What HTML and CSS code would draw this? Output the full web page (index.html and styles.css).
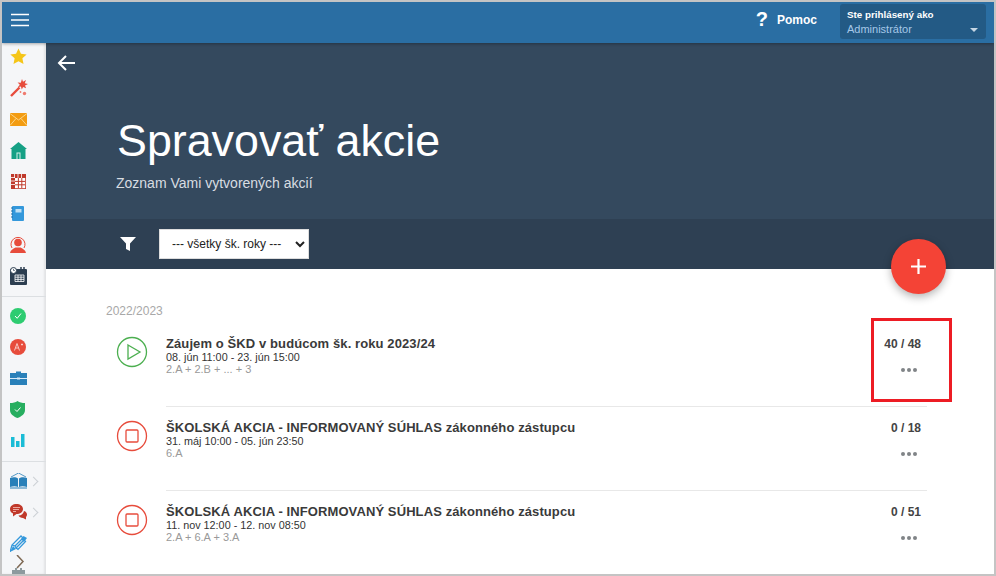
FILE: index.html
```html
<!DOCTYPE HTML>
<html>
    <head>
        <title>Spravovať akcie</title>
        <meta charset="utf-8" />
        <link rel="stylesheet" href="styles.css">
    </head>
    <body>
        <div id="app">
            <header class="topbar">
                <svg class="burger" width="20" height="14" viewBox="0 0 20 14"><path d="M1 1.5h18M1 7h18M1 12.500h18" stroke="#fff" stroke-width="1.600"/></svg>
                <a class="help"><span class="help-mark">?</span><span class="help-text">Pomoc</span></a>
                <div class="user-box">
                    <div class="user-label">Ste prihlásený ako</div>
                    <div class="user-role">Administrátor</div>
                    <span class="user-caret"></span>
                </div>
            </header>
            <div class="body-row">
                <nav class="sidebar">
                    <div class="nav-group">
                        <div class="nav-item"><svg width="17" height="17" viewBox="0 0 18 18"><path d="M9 .5l2.600 5.600 6 .7-4.500 4.100 1.200 6L9 14l-5.300 2.900 1.200-6L.4 6.800l6-.7z" fill="#f5c518"/></svg></div>
                        <div class="nav-item"><svg width="18" height="18" viewBox="0 0 18 18"><path d="M1 17L9.500 8.500" stroke="#e74c3c" stroke-width="2.400"/><path d="M12 0l1 2.800 3-1.700-1.200 3.100 3.200.8-3 1.400 1.100 2.900-3-1.400-1.300 2.600-.9-3-3.100.7 2-2.500-2.200-2.200 3.200.2z" fill="#e74c3c"/><circle cx="14.500" cy="14.500" r="1.700" fill="#ef7a6e"/><circle cx="10.500" cy="13" r=".9" fill="#ef7a6e"/></svg></div>
                        <div class="nav-item"><svg width="17" height="13" viewBox="0 0 17 13"><rect width="17" height="13" fill="#f39c12"/><path d="M0 .5l8.500 6.500L17 .5M0 12.500l6-7M17 12.500l-6-7" fill="none" stroke="#fde3a7" stroke-width=".8"/></svg></div>
                        <div class="nav-item"><svg width="17" height="17" viewBox="0 0 17 17"><path d="M8.500 0l8.500 7h-1.500v10h-14V7H0z" fill="#16a085"/><path d="M6.500 17v-6.500h4V17h-1v-5.500h-2V17z" fill="#d5f0ea"/></svg></div>
                        <div class="nav-item"><svg class="nudge" width="15" height="15" viewBox="0 0 15 15"><rect width="15" height="15" fill="#c0392b"/><path d="M3.500 0v4M7 0v4M10.500 0v4M0 3.500h4M0 7h4M0 10.500h4" stroke="#fff" stroke-width=".8"/><rect x="4" y="4" width="10.200" height="10.200" fill="#fff"/><path d="M7.400 4v10M10.800 4v10M4 7.400h10M4 10.800h10" stroke="#c0392b"/></svg></div>
                        <div class="nav-item"><svg class="nudge" width="13" height="15" viewBox="0 0 13 15"><rect x="1" width="12" height="15" rx="1" fill="#3498db"/><rect x="4.500" y="3" width="6" height="3.500" fill="#bfe0f5"/><path d="M0 2h2M0 5h2M0 8h2M0 11h2" stroke="#1f6fa8"/></svg></div>
                        <div class="nav-item"><svg width="16" height="17" viewBox="0 0 16 17"><path d="M2 12A7 7 0 1 1 14 12" fill="none" stroke="#e74c3c" stroke-width="1"/><circle cx="8" cy="6.500" r="3.800" fill="#e74c3c"/><path d="M0 17c.5-3 3-4 5.500-5.500h5C13 13 15.500 14 16 17z" fill="#e74c3c"/></svg></div>
                        <div class="nav-item"><svg width="17" height="18" viewBox="0 0 17 18"><rect y="2" width="17" height="16" rx="1" fill="#2c3e50"/><path d="M11 0v3M14 0v3" stroke="#2c3e50" stroke-width="1.500"/><path d="M5 8h9v6.500H5zM5 10.200h9M5 12.400h9M8 8v6.500M11 8v6.500" fill="none" stroke="#fff" stroke-width=".8"/><circle cx="3.500" cy="3.500" r="3" fill="#fff" stroke="#2c3e50"/><path d="M3.500 1.800v1.700h1.300" fill="none" stroke="#2c3e50" stroke-width=".7"/></svg></div>
                    </div>
                    <div class="nav-group">
                        <div class="nav-item"><svg width="16" height="16" viewBox="0 0 16 16"><circle cx="8" cy="8" r="8" fill="#2ecc71"/><path d="M5 8l2.200 2.300L11 5.500" fill="none" stroke="#fff"/></svg></div>
                        <div class="nav-item"><svg width="16" height="16" viewBox="0 0 16 16"><circle cx="8" cy="8" r="8" fill="#e74c3c"/><path d="M4.500 11.500L7 4.500l2.500 7M5.500 9h3M11 5.500h2M12 4.500v2" fill="none" stroke="#fbd5d0" stroke-width=".9"/></svg></div>
                        <div class="nav-item"><svg width="17" height="14" viewBox="0 0 17 14"><path d="M6 2V.5h5V2h6v12H0V2z" fill="#2980b9"/><path d="M0 7.500h17" stroke="#d6eaf8"/><rect x="7" y="6.500" width="3" height="2" fill="#d6eaf8"/></svg></div>
                        <div class="nav-item"><svg width="15" height="17" viewBox="0 0 15 17"><path d="M7.500 0c2 1.500 4.500 2 7.500 2v7c0 4-3.500 6.500-7.500 8C3.500 15.500 0 13 0 9V2c3 0 5.500-.5 7.500-2z" fill="#27ae60"/><path d="M5 8.500l2 2 3.500-4" fill="none" stroke="#fff"/></svg></div>
                        <div class="nav-item"><svg class="nudge" width="14" height="13" viewBox="0 0 14 13"><path d="M0 3h3.500v10H0zM5 7h3.500v6H5zM10 0h3.500v13H10z" fill="#1abcd6"/></svg></div>
                    </div>
                    <div class="nav-group nav-group-last">
                        <div class="nav-item has-sub"><svg width="17" height="16" viewBox="0 0 17 16"><path d="M1 4l7.500-4L16 4" fill="none" stroke="#2980b9" stroke-width=".8"/><path d="M0 5c3-1 6-1 8 .5V14c-2-1-5-1-8 0zM17 5c-3-1-6-1-8 .5V14c2-1 5-1 8 0z" fill="#2980b9"/><path d="M0 15h17" stroke="#2980b9"/></svg><span class="nav-chevron"></span></div>
                        <div class="nav-item has-sub"><svg width="17" height="16" viewBox="0 0 17 16"><path d="M6.500 0C10 0 13 2 13 5s-3 5-6.500 5L3 12.500V9.500C1 8.500 0 7 0 5c0-3 3-5 6.500-5z" fill="#c0392b"/><path d="M14 7c2 .5 3 2 3 3.500 0 1-.5 2-1 2.500v2.500L13 14c-2 0-4-1-4.500-2.500 3 0 5-2 5.500-4.500z" fill="#c0392b"/><path d="M3 3.500h7M3 5.500h6M3 7.500h3" stroke="#f0b4ad" stroke-width=".9"/></svg><span class="nav-chevron"></span></div>
                        <div class="nav-item"><svg width="17" height="17" viewBox="0 0 17 17"><path d="M0 17l2-7L11 1l2 2-8 8M2 10l3 1 1 2L14 5M6 13l8-8 1.500 1.500L8 14.500z" fill="none" stroke="#3498db" stroke-width="1.300"/><path d="M0 17l3-6 3 3z" fill="#3498db"/><path d="M11 4l2.500-3L17 3l-3 4" fill="#3498db"/></svg></div>
                    </div>
                    <svg class="nav-more" width="16" height="22" viewBox="0 0 16 22"><path d="M5 0l6 6.500-6 6.500" fill="none" stroke="#7f6a55" stroke-width="1.500"/><path d="M0 15h3v-2h2v2h3v-2h2v2h3v6H0z" fill="#8d9a9e"/></svg>
                </nav>
                <main class="content">
                    <svg class="back" width="18" height="16" viewBox="0 0 18 16"><path d="M9 1L2 8l7 7M2 8h16" fill="none" stroke="#fff" stroke-width="2"/></svg>
                    <section class="hero">
                        <h1>Spravovať akcie</h1>
                        <p>Zoznam Vami vytvorených akcií</p>
                    </section>
                    <div class="filter-bar">
                        <svg class="filter-icon" width="16" height="14" viewBox="0 0 16 14"><path d="M0 0h16l-6 6.500V14l-4-2V6.500z" fill="#fff"/></svg>
                        <select class="year-select"><option>--- všetky šk. roky ---</option></select>
                    </div>
                    <button class="fab"><svg width="15" height="15" viewBox="0 0 15 15"><path d="M7.500 0v15M0 7.500h15" stroke="#fff" stroke-width="2.200"/></svg></button>
                    <div class="list">
                        <div class="year-label">2022/2023</div>
                        <div class="event">
                            <svg class="status" width="32" height="32" viewBox="0 0 32 32"><circle cx="16" cy="16" r="14.500" fill="none" stroke="#4caf50" stroke-width="1.300"/><path d="M12 9l12 7-12 7z" fill="none" stroke="#4caf50" stroke-width="1.300"/></svg>
                            <div class="event-main">
                                <div class="event-title">Záujem o ŠKD v budúcom šk. roku 2023/24</div>
                                <div class="event-date">08. jún 11:00 - 23. jún 15:00</div>
                                <div class="event-classes">2.A + 2.B + ... + 3</div>
                            </div>
                            <div class="event-side">
                                <div class="event-count">40 / 48</div>
                                <div class="event-dots"><i></i><i></i><i></i></div>
                            </div>
                        </div>
                        <div class="event">
                            <svg class="status" width="32" height="32" viewBox="0 0 32 32"><circle cx="16" cy="16" r="14.500" fill="none" stroke="#e74c3c" stroke-width="1.300"/><rect x="10" y="10" width="12" height="12" rx="1" fill="none" stroke="#e74c3c" stroke-width="1.300"/></svg>
                            <div class="event-main">
                                <div class="event-title">ŠKOLSKÁ AKCIA - INFORMOVANÝ SÚHLAS zákonného zástupcu</div>
                                <div class="event-date">31. máj 10:00 - 05. jún 23:50</div>
                                <div class="event-classes">6.A</div>
                            </div>
                            <div class="event-side">
                                <div class="event-count">0 / 18</div>
                                <div class="event-dots"><i></i><i></i><i></i></div>
                            </div>
                        </div>
                        <div class="event">
                            <svg class="status" width="32" height="32" viewBox="0 0 32 32"><circle cx="16" cy="16" r="14.500" fill="none" stroke="#e74c3c" stroke-width="1.300"/><rect x="10" y="10" width="12" height="12" rx="1" fill="none" stroke="#e74c3c" stroke-width="1.300"/></svg>
                            <div class="event-main">
                                <div class="event-title">ŠKOLSKÁ AKCIA - INFORMOVANÝ SÚHLAS zákonného zástupcu</div>
                                <div class="event-date">11. nov 12:00 - 12. nov 08:50</div>
                                <div class="event-classes">2.A + 6.A + 3.A</div>
                            </div>
                            <div class="event-side">
                                <div class="event-count">0 / 51</div>
                                <div class="event-dots"><i></i><i></i><i></i></div>
                            </div>
                        </div>
                    </div>
                    <div class="highlight"></div>
                </main>
            </div>
        </div>
    </body>
</html>
```

FILE: styles.css
```css
* {
    box-sizing: border-box;
}

html, body {
    margin: 0;
    height: 100%;
    overflow: hidden;
}

body {
    font-family: "Liberation Sans", Arial, sans-serif;
    background-color: #fff;
}

#app {
    height: 576px;
    border: 2px solid #c4c4c4;
    display: flex;
    flex-direction: column;
    overflow: hidden;
}

.topbar {
    height: 41px;
    flex: none;
    background-color: #2a6ea3;
    display: flex;
    align-items: center;
    padding: 0 8px 0 8px;
    box-shadow: 0 1px 3px rgba(0, 0, 0, 0.3);
    position: relative;
    z-index: 2;
}

.burger {
    display: block;
    margin-top: -5px;
}

.help {
    margin-left: auto;
    display: flex;
    align-items: center;
    color: #fff;
    font-weight: bold;
    font-size: 12px;
    margin-right: 23px;
    margin-top: -6px;
}

.help-mark {
    font-size: 20px;
    margin-right: 9px;
}

.user-box {
    width: 146px;
    height: 35px;
    background-color: #235a85;
    border-radius: 3px;
    padding: 5px 7px;
    position: relative;
    margin-top: -2px;
}

.user-label {
    color: #fff;
    font-size: 9.800px;
    font-weight: bold;
    line-height: 12px;
}

.user-role {
    color: #a6c8e8;
    font-size: 11px;
    line-height: 16px;
}

.user-caret {
    position: absolute;
    right: 8px;
    bottom: 7px;
    border-left: 4px solid transparent;
    border-right: 4px solid transparent;
    border-top: 4px solid #c5d6e4;
}

.body-row {
    flex: 1;
    display: flex;
    min-height: 0;
}

.sidebar {
    width: 44px;
    flex: none;
    background-color: #f5f6f8;
    box-shadow: inset -2px 0 2px rgba(0, 0, 0, 0.08);
    overflow: hidden;
}

.nav-group {
    padding-bottom: 5px;
    border-bottom: 1px solid #dcdfe2;
    margin-bottom: 4px;
}

.nav-group:first-child {
    margin-top: -2px;
    padding-bottom: 4.600px;
}

.nav-group:first-child .nav-item {
    height: 31.300px;
}

.nav-group-last {
    border-bottom: none;
    padding-bottom: 0;
    margin-bottom: 0;
}

.nav-item {
    height: 31px;
    display: flex;
    align-items: center;
    padding-left: 8px;
    position: relative;
}

.nav-item svg.nudge {
    margin-left: 1px;
}

.nav-chevron {
    width: 7px;
    height: 7px;
    border-top: 1px solid #ccd1d5;
    border-right: 1px solid #ccd1d5;
    transform: rotate(45deg);
    position: absolute;
    left: 28px;
    top: 12px;
}

.nav-more {
    display: block;
    margin: -4px 0 0 10px;
}

.content {
    flex: 1;
    position: relative;
    min-width: 0;
    overflow: hidden;
}

.back {
    position: absolute;
    left: 11px;
    top: 12px;
}

.hero {
    height: 176px;
    background-color: #34495e;
    padding: 67px 0 0 71px;
    color: #fff;
}

.hero h1 {
    margin: 0;
    font-size: 44.800px;
    font-weight: normal;
    line-height: 60px;
}

.hero p {
    margin: 5px 0 0 -1px;
    font-size: 14px;
    color: #d8dde2;
    line-height: 16px;
}

.filter-bar {
    height: 50px;
    background-color: #2e4053;
    display: flex;
    align-items: center;
    padding-left: 74px;
}

.filter-icon {
    display: block;
    margin-top: -1px;
}

.year-select {
    margin-left: 23px;
    width: 150px;
    height: 30px;
    border: 1px solid #ddd;
    background-color: #fff;
    font-family: "Liberation Sans", Arial, sans-serif;
    font-size: 12px;
    color: #222;
    padding-left: 8px;
}

.fab {
    position: absolute;
    left: 845px;
    top: 196px;
    width: 55px;
    height: 55px;
    border: none;
    border-radius: 50%;
    background-color: #f44336;
    box-shadow: 0 3px 8px rgba(0, 0, 0, 0.3);
    display: flex;
    align-items: center;
    justify-content: center;
    padding: 0;
}

.list {
    padding: 35px 0 0 60px;
}

.year-label {
    font-size: 12px;
    color: #a8a8a8;
    line-height: 18px;
    margin-top: -2px;
    margin-bottom: 2px;
}

.event {
    height: 84px;
    display: flex;
    padding-top: 14px;
    position: relative;
}

.event + .event::before {
    content: "";
    position: absolute;
    left: 60px;
    top: 0;
    width: 761px;
    border-top: 1px solid #e8e8e8;
}

.status {
    margin: 0 0 0 10px;
    flex: none;
    display: block;
}

.event-main {
    margin-left: 18px;
    width: 690px;
    flex: none;
}

.event-title {
    font-size: 13px;
    font-weight: bold;
    color: #3a3a3a;
    line-height: 15px;
    letter-spacing: 0.1px;
}

.event-date {
    font-size: 10.800px;
    color: #333;
    line-height: 12px;
}

.event-classes {
    font-size: 11px;
    color: #999;
    line-height: 13px;
}

.event-side {
    width: 50px;
    margin-left: 15px;
    text-align: right;
}

.event-count {
    font-size: 12px;
    font-weight: bold;
    color: #444;
    line-height: 16px;
}

.event-dots {
    display: flex;
    justify-content: flex-end;
    gap: 2px;
    margin-top: 16px;
    padding-right: 4px;
}

.event-dots i {
    width: 4px;
    height: 4px;
    border-radius: 50%;
    background-color: #808487;
}

.highlight {
    position: absolute;
    left: 825px;
    top: 275px;
    width: 81px;
    height: 84px;
    border: 3px solid #ed1c24;
}
```
